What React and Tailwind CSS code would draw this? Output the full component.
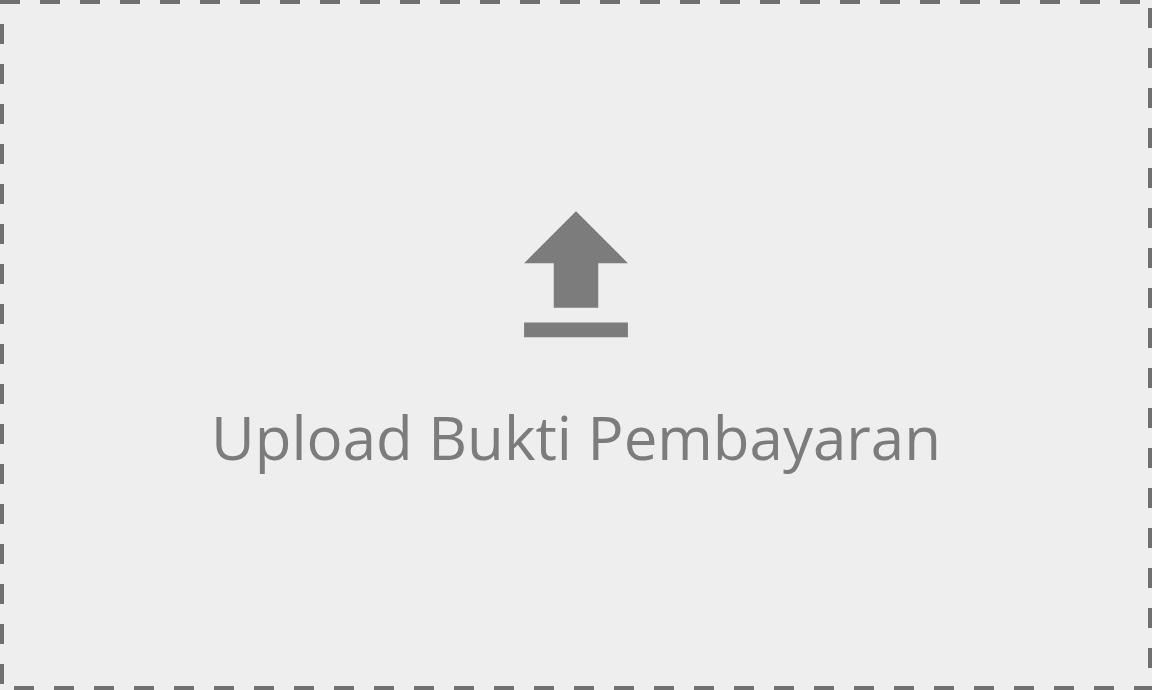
export default function App() {
  return (
    <label
      htmlFor="payment-proof"
      className="relative flex min-h-screen cursor-pointer flex-col items-center justify-center gap-[26px] overflow-hidden bg-[#eeeeee] pb-5 text-[#7c7c7c]"
    >
      <svg aria-hidden="true" className="pointer-events-none absolute inset-0 h-full w-full">
        <rect width="100%" height="100%" fill="none" stroke="#707070" strokeWidth="8" strokeDasharray="20 20" />
      </svg>
      <svg aria-hidden="true" viewBox="0 0 24 24" fill="currentColor" className="size-[178px]">
        <path d="M9 16h6v-6h4l-7-7-7 7h4zm-4 2h14v2H5z" />
      </svg>
      <span className="text-center font-['Open_Sans','Noto_Sans',sans-serif] text-[60px] leading-[88px]">
        Upload Bukti Pembayaran
      </span>
      <input id="payment-proof" type="file" className="sr-only" />
    </label>
  );
}
